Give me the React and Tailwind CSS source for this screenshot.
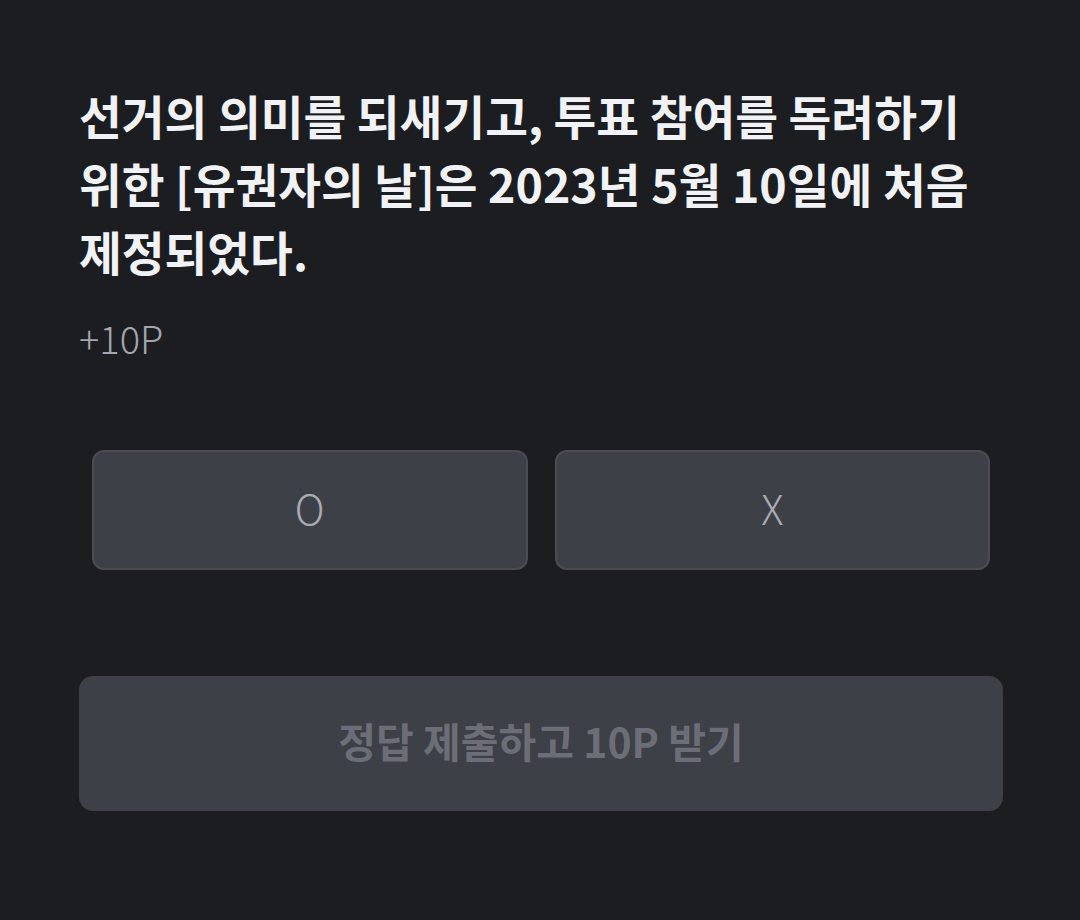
import React, { useState } from 'react';

const App = () => {
  const [choice, setChoice] = useState(null);

  return (
    <div
      className="min-h-screen w-full bg-[#1c1d21] px-[79px] pt-[81px]"
      style={{ fontFamily: '"Noto Sans CJK KR", "Noto Sans", sans-serif' }}
    >
      <div className="w-[924px]">
        {/* Question */}
        <h1 className="text-[46.5px] font-semibold leading-[68px] text-[#f1f2f5]">
          선거의 의미를 되새기고, 투표 참여를 독려하기 위한 [유권자의 날]은 2023년 5월 10일에 처음 제정되었다.
        </h1>
        <p className="mt-[29px] text-[38px] font-light leading-[48px] text-[#a3a6ad]">+10P</p>

        {/* O / X */}
        <div className="mx-[13px] mt-[88px] flex gap-[27px]">
          {['O', 'X'].map((v) => (
            <button
              key={v}
              onClick={() => setChoice(v)}
              className={`flex h-[120px] flex-1 items-center justify-center rounded-[12px] border-2 bg-[#3e4048] pb-[4px] text-[41px] font-light text-[#a9acb3] ${
                choice === v ? 'border-[#8b8e96]' : 'border-[#4a4c54]'
              }`}
            >
              {v}
            </button>
          ))}
        </div>

        {/* Submit */}
        <button
          disabled={!choice}
          className="mt-[106px] flex h-[135px] w-full items-center justify-center rounded-[14px] bg-[#3e4048] pb-[6px] text-[41px] font-semibold text-[#6b6e77]"
        >
          정답 제출하고 10P 받기
        </button>
      </div>
    </div>
  );
};

export default App;
